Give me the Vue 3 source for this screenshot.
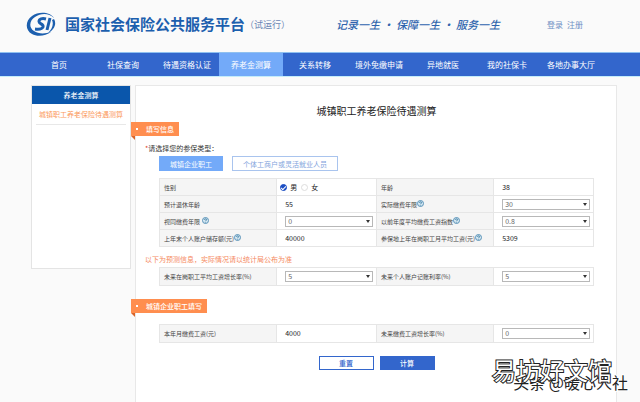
<template>
  <div class="page">
    <header class="header">
      <svg class="logo" viewBox="0 0 30 24" aria-hidden="true">
        <path d="M28 6C24 0 13-1 6 4C-1 9-1 18 6 22C11 25 20 24 25 20C19 22 12 22 8 19C2 15 4 8 9 5C15 1 23 1 28 6Z" fill="#1c5fae" />
        <path d="M28 7C31 12 28 18 22 21C26 17 28 12 26 8" fill="#1c5fae" />
        <path d="M20 7C16 6 13 7 13 9.500C13 12 18 12 17 15C16 17.500 13 17.500 9 17" fill="none" stroke="#1c5fae" stroke-width="3" />
        <path d="M24 6L21 18" fill="none" stroke="#1c5fae" stroke-width="3" />
      </svg>
      <h1 class="site-name">国家社会保险公共服务平台</h1>
      <span class="trial">（试运行）</span>
      <span class="slogan">记录一生 · 保障一生 · 服务一生</span>
      <div class="account">
        <a href="#">登录</a>
        <a href="#">注册</a>
      </div>
    </header>

    <nav class="nav">
      <a
        v-for="item in navItems"
        :key="item"
        href="#"
        :class="{ 'active': item === '养老金测算' }"
      >{{ item }}</a>
    </nav>

    <div class="content">
      <aside class="sidebar">
        <h2>养老金测算</h2>
        <a href="#">城镇职工养老保险待遇测算</a>
      </aside>

      <main class="main">
        <h2 class="title">城镇职工养老保险待遇测算</h2>

        <h3 class="tag">填写信息</h3>
        <p class="question"><span class="required">*</span>请选择您的参保类型：</p>
        <div class="types">
          <button
            v-for="(type, index) in types"
            :key="type"
            type="button"
            class="type-btn"
            :class="{ 'selected': currentType === index }"
            @click="currentType = index"
          >{{ type }}</button>
        </div>

        <template v-for="section in sections" :key="section.key">
          <p v-if="section.key === 'forecast'" class="hint">以下为预测信息，实际情况请以统计局公布为准</p>
          <h3 v-if="section.key === 'company'" class="tag tag-company">城镇企业职工填写</h3>
          <table class="form-table" :class="section.key">
            <tbody>
              <tr v-for="(row, index) in section.rows" :key="index">
                <template v-for="field in row" :key="field.id">
                  <th scope="row">
                    <label v-if="field.options" :for="field.id">{{ field.label }}</label>
                    <template v-else>{{ field.label }}</template>
                    <svg v-if="field.help" class="help" :class="{ 'spaced': field.id === 'deemedYears' }" viewBox="0 0 14 14" aria-hidden="true">
                      <circle cx="7" cy="7" r="6" fill="#d6e8f2" stroke="#5b93b8" stroke-width="2" />
                      <path d="M5 5.500C5 3 9 3 9 5.500C9 7 7 7 7 8.500M7 10V11" fill="none" stroke="#3d7fa6" stroke-width="2" />
                    </svg>
                  </th>
                  <td v-if="field.id === 'gender'" class="gender">
                    <label><input v-model="form.gender" type="radio" name="gender" value="male" />男</label>
                    <label><input v-model="form.gender" type="radio" name="gender" value="female" />女</label>
                  </td>
                  <td v-else-if="field.options">
                    <div class="select-box">
                      <select :id="field.id" v-model="form[field.id]">
                        <option v-for="option in field.options" :key="option" :value="option">{{ option }}</option>
                      </select>
                    </div>
                  </td>
                  <td v-else>{{ form[field.id] }}</td>
                </template>
              </tr>
            </tbody>
          </table>
        </template>

        <div class="actions">
          <button type="button" class="btn" @click="handleReset">重置</button>
          <button type="button" class="btn btn-primary">计算</button>
        </div>
      </main>
    </div>

    <div class="watermark watermark-author">头条 @暖心人社</div>
    <div class="watermark watermark-site">易坊好文馆</div>
  </div>
</template>

<script setup>
import { ref, reactive } from 'vue'

const navItems = ['首页', '社保查询', '待遇资格认证', '养老金测算', '关系转移', '境外免缴申请', '异地就医', '我的社保卡', '各地办事大厅']

const types = ['城镇企业职工', '个体工商户或灵活就业人员']
const currentType = ref(0)

const defaults = {
  gender: 'male',
  age: '38',
  retireAge: '55',
  paidYears: '30',
  deemedYears: '0',
  wageIndex: '0.8',
  balance: '40000',
  localWage: '5309',
  wageGrowth: '5',
  interest: '5',
  monthWage: '4000',
  payGrowth: '0'
}
const form = reactive({ ...defaults })

const sections = [
  {
    key: 'basic',
    rows: [
      [{ id: 'gender', label: '性别' }, { id: 'age', label: '年龄' }],
      [
        { id: 'retireAge', label: '预计退休年龄' },
        { id: 'paidYears', label: '实际缴费年限', help: true, options: ['15', '20', '25', '30'] }
      ],
      [
        { id: 'deemedYears', label: '视同缴费年限', help: true, options: ['0', '5', '10'] },
        { id: 'wageIndex', label: '以前年度平均缴费工资指数', help: true, options: ['0.6', '0.8', '1.0'] }
      ],
      [
        { id: 'balance', label: '上年末个人账户储存额(元)', help: true },
        { id: 'localWage', label: '参保地上年在岗职工月平均工资(元)', help: true }
      ]
    ]
  },
  {
    key: 'forecast',
    rows: [
      [
        { id: 'wageGrowth', label: '未来在岗职工平均工资增长率(%)', options: ['3', '4', '5'] },
        { id: 'interest', label: '未来个人账户记账利率(%)', options: ['3', '4', '5'] }
      ]
    ]
  },
  {
    key: 'company',
    rows: [
      [
        { id: 'monthWage', label: '本年月缴费工资(元)' },
        { id: 'payGrowth', label: '未来缴费工资增长率(%)', options: ['0', '3', '5'] }
      ]
    ]
  }
]

// 重置表单
const handleReset = () => {
  Object.assign(form, defaults)
  currentType.value = 0
}
</script>

<style>
body {
  margin: 0;
  background: #fafafa;
}
</style>

<style scoped>
.page {
  position: relative;
  display: flex;
  flex-direction: column;
  min-height: 100vh;
  overflow: hidden;
  font-family: "Noto Sans CJK SC", sans-serif;
  font-size: 7px;
  color: #333;
}

.page * {
  box-sizing: border-box;
}

h1,
h2,
h3,
p {
  margin: 0;
  font-weight: normal;
}

a {
  text-decoration: none;
}

button,
select {
  font-family: inherit;
  font-size: 7px;
}

.header {
  display: flex;
  align-items: center;
  height: 52px;
  padding: 0 57px 4px 26px;
}

.logo {
  width: 30px;
  height: 24px;
  margin-right: 9px;
}

.site-name {
  font-size: 15px;
  font-weight: bold;
  line-height: 24px;
  color: #1c5fae;
  white-space: nowrap;
}

.trial {
  font-size: 9px;
  color: #6b86b5;
  white-space: nowrap;
}

.slogan {
  margin-left: 46px;
  font-size: 11px;
  font-style: italic;
  font-weight: 500;
  color: #2f64ad;
  white-space: nowrap;
}

.account {
  display: flex;
  gap: 4px;
  margin-left: auto;
}

.account a {
  font-size: 8px;
  color: #6f8fc4;
}

.nav {
  display: flex;
  padding: 0 37px 0 27px;
  background: #3366cc;
  border-top: 1px solid #8fc0f0;
  border-bottom: 1px solid #c4ecfa;
}

.nav a {
  flex: 1;
  font-size: 8px;
  line-height: 23px;
  text-align: center;
  color: #fff;
  white-space: nowrap;
}

.nav a.active {
  background: #73aaf9;
}

.content {
  flex: 1;
  display: flex;
  align-items: stretch;
  gap: 4px;
  padding: 8px 23px 0 31px;
}

.sidebar {
  align-self: flex-start;
  width: 100px;
  min-height: 184px;
  padding-bottom: 8px;
  background: #fff;
  border: 1px solid #e4e4e4;
  text-align: center;
}

.sidebar h2 {
  background: #0a56ab;
  font-size: 7px;
  font-weight: 500;
  line-height: 18px;
  color: #fff;
}

.sidebar a {
  display: block;
  margin: 0 4px;
  border-bottom: 1px solid #e8e8e8;
  line-height: 20px;
  color: #fb9a5c;
}

.main {
  flex: 1;
  min-width: 0;
  padding: 17px 22px 16px 23px;
  background: #fff;
  border: 1px solid #e8e8e8;
  border-bottom: none;
}

.title {
  font-size: 10px;
  line-height: 16px;
  text-align: center;
  color: #222;
}

.tag {
  position: relative;
  display: flex;
  align-items: center;
  width: fit-content;
  height: 14px;
  margin: 3px 0 0 -28px;
  padding: 0 5px;
  background: #ff8e4f;
  font-size: 7px;
  font-weight: 500;
  color: #fff;
}

.tag::before {
  content: "";
  width: 2px;
  height: 2px;
  margin-right: 8px;
  background: #fff;
}

.tag::after {
  content: "";
  position: absolute;
  left: 0;
  top: 100%;
  border-top: 4px solid #d9642a;
  border-left: 4px solid transparent;
}

.tag-company {
  margin-top: 13px;
}

.question {
  margin: 6px 0 0 -14px;
  line-height: 12px;
}

.required {
  color: #e0401f;
}

.types {
  display: flex;
  gap: 9px;
  margin-top: 2px;
}

.type-btn {
  height: 15px;
  padding: 0 10px;
  background: #fff;
  border: 1px solid #a9c4ee;
  line-height: 12px;
  color: #7fa3dc;
  cursor: pointer;
}

.type-btn.selected {
  background: #73aaf9;
  border-color: #73aaf9;
  color: #fff;
}

.form-table {
  width: 100%;
  margin-top: 7px;
  table-layout: fixed;
  border-collapse: collapse;
}

.form-table th,
.form-table td {
  height: 17px;
  padding: 0 3px 0 8px;
  border: 1px solid #e6e6e6;
  line-height: 11px;
  text-align: left;
  white-space: nowrap;
}

.form-table th {
  width: 27%;
  padding: 0 0 0 4px;
  background: #f5f5f5;
  font-size: 6px;
  font-weight: normal;
  color: #444;
}

.form-table td {
  width: 23%;
  color: #222;
}

.form-table.forecast {
  margin-top: 2px;
}

.form-table.company {
  margin-top: 11px;
}

.form-table.forecast td,
.form-table.company td {
  height: 18px;
}

.help {
  width: 7px;
  height: 7px;
  vertical-align: 0;
}

.help.spaced {
  margin-left: 2px;
}

.form-table .gender {
  padding-left: 3px;
}

.gender label {
  display: inline-flex;
  align-items: center;
  gap: 3px;
  margin-right: 4px;
  vertical-align: middle;
}

.gender input {
  appearance: none;
  display: flex;
  align-items: center;
  justify-content: center;
  width: 7px;
  height: 7px;
  margin: 0;
  border: 1px solid #ddd;
  border-radius: 50%;
  background: #fff;
}

.gender input:checked {
  background: #1d4fc4;
  border-color: #1d4fc4;
}

.gender input:checked::before {
  content: "";
  width: 4px;
  height: 2px;
  border-left: 1px solid #fff;
  border-bottom: 1px solid #fff;
  transform: rotate(-45deg);
}

.select-box {
  position: relative;
  display: flex;
}

.select-box select {
  appearance: none;
  width: 100%;
  height: 11px;
  padding: 0 10px 0 2px;
  border: 1px solid #b8b8b8;
  border-radius: 0;
  background: #fff;
  line-height: 9px;
  color: #666;
}

.select-box::after {
  content: "";
  position: absolute;
  right: 3px;
  top: 4px;
  border: 2px solid transparent;
  border-top: 3px solid #333;
  border-bottom: none;
  pointer-events: none;
}

.hint {
  margin: 6px 0 0 -14px;
  line-height: 12px;
  color: #f58a62;
}

.actions {
  display: flex;
  justify-content: center;
  gap: 6px;
  margin-top: 13px;
}

.btn {
  width: 55px;
  height: 14px;
  padding: 0;
  border: 1px solid #3366cc;
  background: #fff;
  line-height: 12px;
  font-weight: 500;
  color: #3366cc;
  cursor: pointer;
}

.btn-primary {
  background: #3366cc;
  color: #fff;
}

.watermark {
  position: absolute;
  white-space: nowrap;
  paint-order: stroke fill;
  pointer-events: none;
}

.watermark-author {
  right: 12px;
  bottom: 8px;
  font-size: 16px;
  line-height: 24px;
  color: #222;
  -webkit-text-stroke: 2px #fff;
}

.watermark-site {
  right: 28px;
  bottom: 16px;
  font-size: 24px;
  line-height: 32px;
  color: #fff;
  -webkit-text-stroke: 2px #222;
}
</style>
